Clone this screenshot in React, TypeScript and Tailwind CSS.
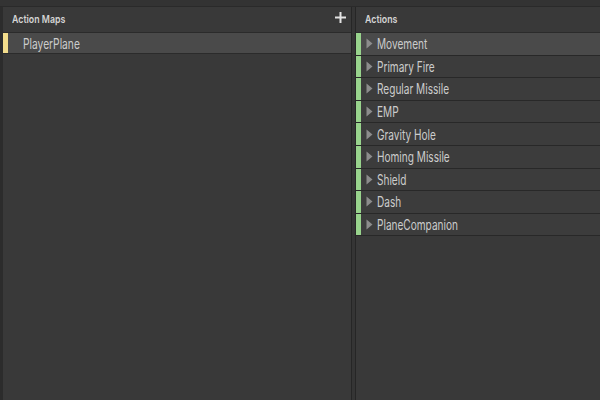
import React from "react";

const actions = [
  "Movement",
  "Primary Fire",
  "Regular Missile",
  "EMP",
  "Gravity Hole",
  "Homing Missile",
  "Shield",
  "Dash",
  "PlaneCompanion",
];

function Tri() {
  return (
    <svg width="7" height="11" viewBox="0 0 7 11" className="shrink-0">
      <path d="M0.5 0.5 L6.5 5.5 L0.5 10.5 Z" fill="#8c8c8c" />
    </svg>
  );
}

export default function App() {
  return (
    <div
      className="w-[600px] h-[400px] bg-[#393939] flex flex-col overflow-hidden text-[#cfcfcf]"
      style={{ fontFamily: "Inter, Roboto, 'Noto Sans', sans-serif" }}
    >
      <div className="h-[7px] bg-[#333333] border-b border-[#2a2a2a] shrink-0" />
      <div className="flex flex-1 min-h-0">
        {/* Left panel */}
        <div className="w-[352px] flex flex-col border-l-[3px] border-[#2c2c2c] border-r border-r-[#262626]">
          <div className="h-[25px] flex items-center justify-between pl-[9px] pr-[5px]">
            <span className="inline-block origin-left scale-x-[0.8] text-[11px] font-semibold text-[#d4d4d4] whitespace-nowrap">
              Action Maps
            </span>
            <svg width="11" height="11" viewBox="0 0 11 11" className="mb-[4px]">
              <path d="M5.5 0 V11 M0 5.5 H11" stroke="#e2e2e2" strokeWidth="2" />
            </svg>
          </div>
          <div className="h-[22px] flex items-center bg-[#4a4a4a] border-y border-[#2b2b2b]">
            <div className="w-[5px] h-full bg-[#f3dd8c]" />
            <span className="ml-[15px] inline-block origin-left scale-x-[0.73] text-[14px] text-[#cccccc] whitespace-nowrap">
              PlayerPlane
            </span>
          </div>
        </div>
        {/* Divider */}
        <div className="w-[4px] bg-[#353535] border-r border-[#262626]" />
        {/* Right panel */}
        <div className="flex-1 flex flex-col">
          <div className="h-[25px] flex items-center pl-[9px]">
            <span className="inline-block origin-left scale-x-[0.8] text-[11px] font-semibold text-[#d4d4d4] whitespace-nowrap">
              Actions
            </span>
          </div>
          <div className="border-t border-[#2b2b2b]">
            {actions.map((a, i) => (
              <div
                key={a}
                className={`h-[22.6px] flex items-center border-b border-[#282828] ${
                  i === 0 ? "bg-[#4a4a4a]" : "bg-[#3c3c3c]"
                }`}
              >
                <div className="w-[5px] h-full bg-[#98d38c]" />
                <div className="ml-[5px]">
                  <Tri />
                </div>
                <span className="ml-[4px] inline-block origin-left scale-x-[0.72] text-[14px] text-[#cccccc] whitespace-nowrap">
                  {a}
                </span>
              </div>
            ))}
          </div>
        </div>
      </div>
    </div>
  );
}
